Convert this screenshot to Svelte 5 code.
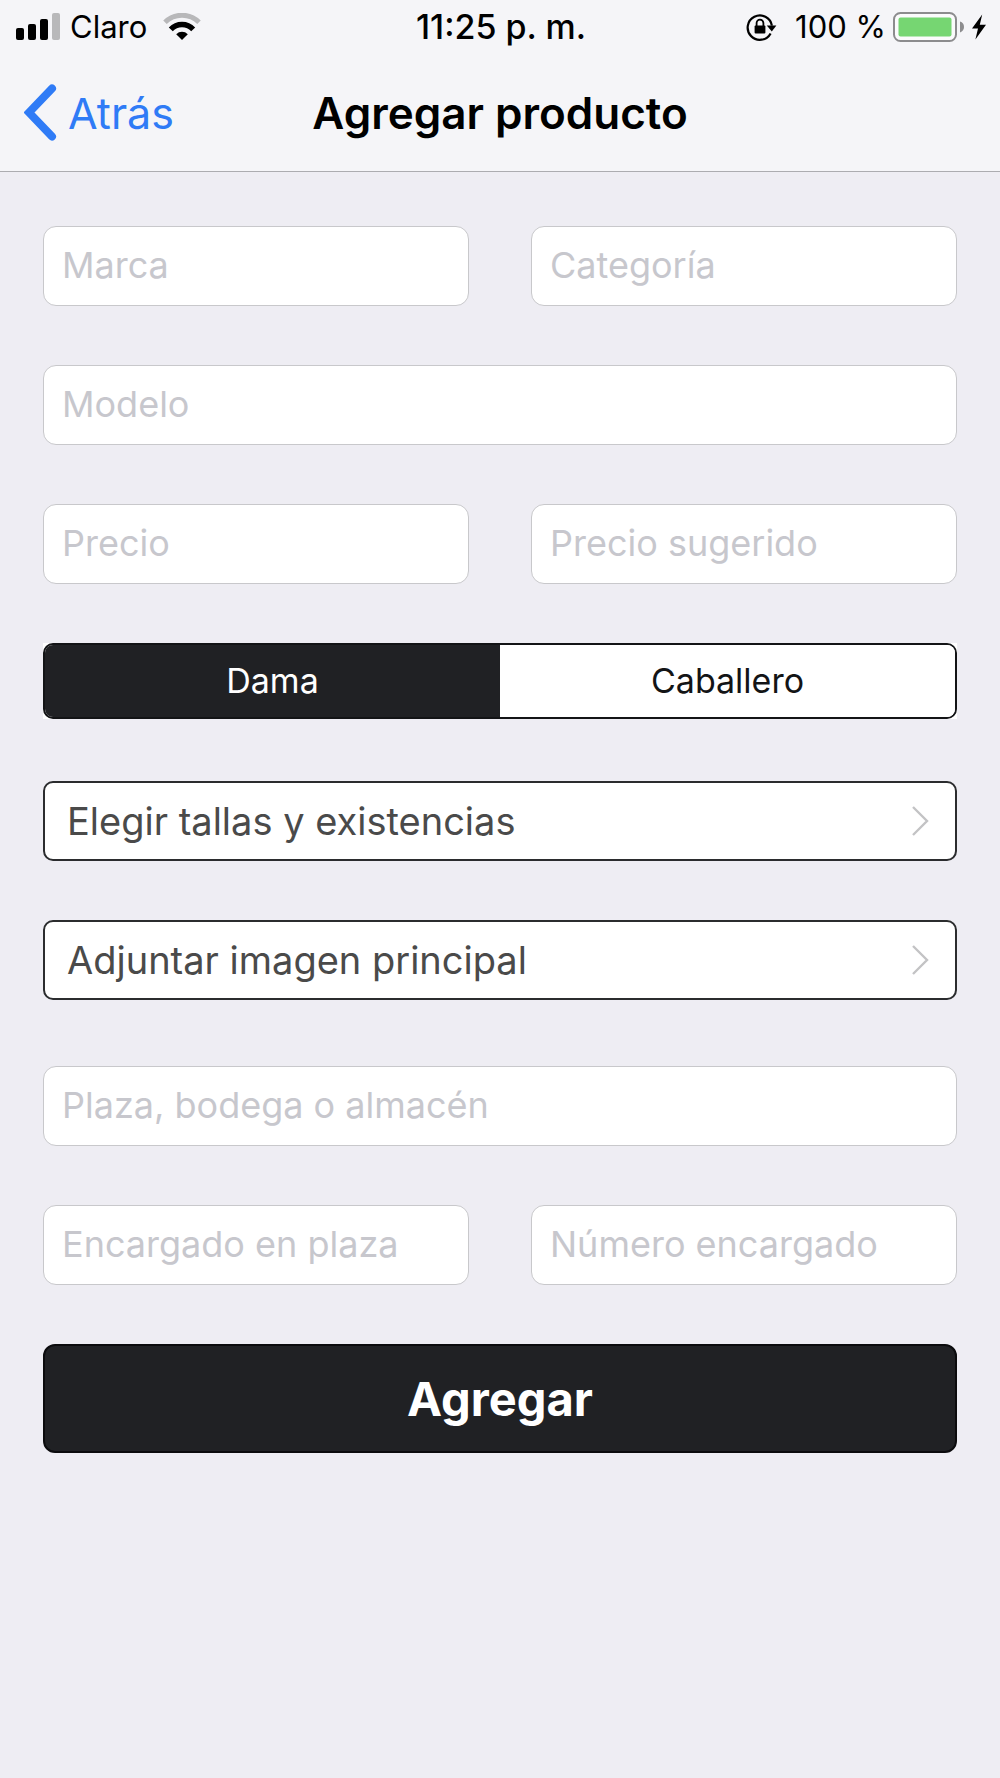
<script>
  let department = $state('dama');
  const departments = [
    { value: 'dama', label: 'Dama' },
    { value: 'caballero', label: 'Caballero' }
  ];
</script>

{#snippet field(id, label)}
  <input class="field" {id} name={id} type="text" placeholder={label} aria-label={label} />
{/snippet}

{#snippet link(label)}
  <button class="picker" type="button">
    <span>{label}</span>
    <svg width="18" height="32" viewBox="0 0 18 32" aria-hidden="true">
      <path d="M2 2 L16 16 L2 30" fill="none" stroke="#c3c3c5" stroke-width="2.4" />
    </svg>
  </button>
{/snippet}

<div class="screen">
  <header>
    <div class="status">
      <div class="carrier">
        <svg width="44" height="28" viewBox="0 0 44 28" aria-hidden="true">
          <rect x="0" y="15" width="8" height="12" rx="2" />
          <rect x="12" y="11" width="8" height="16" rx="2" />
          <rect x="24" y="6" width="8" height="21" rx="2" />
          <rect x="36" y="0" width="8" height="27" rx="2" fill="#b8b8ba" />
        </svg>
        <span>Claro</span>
        <svg class="wifi" width="38" height="28" viewBox="0 0 38 28" aria-hidden="true">
          <path d="M2 9.8 A24 24 0 0 1 36 9.8" fill="none" stroke="#b8b8ba" stroke-width="5" transform="translate(0 -0.5)" />
          <path d="M7.8 16.4 A15.2 15.2 0 0 1 30.2 16.4" fill="none" stroke="#000" stroke-width="5.4" />
          <path d="M13.2 21.2 A8.2 8.2 0 0 1 24.8 21.2 L19 27 Z" />
        </svg>
      </div>
      <time>11:25 p. m.</time>
      <div class="power">
        <svg class="lock" width="32" height="28" viewBox="0 0 32 28" aria-hidden="true">
          <path d="M24.6 20.4 A12.2 12.2 0 1 1 25.9 12.6" fill="none" stroke="#000" stroke-width="2.2" />
          <path d="M20.8 12.6 H30.4 L25.8 18.6 Z" />
          <rect x="8.6" y="12.4" width="10.8" height="8" rx="1" />
          <path d="M10.6 13 V10 A3.4 3.4 0 0 1 17.4 10 V13" fill="none" stroke="#000" stroke-width="1.8" />
        </svg>
        <span>100 %</span>
        <svg width="72" height="30" viewBox="0 0 72 30" aria-hidden="true">
          <rect x="1" y="1" width="62" height="28" rx="6.5" fill="#fff" fill-opacity="0.6" stroke="#8c8c8e" stroke-width="2" />
          <rect x="5.5" y="5.5" width="53" height="19" rx="2" fill="#76d672" />
          <path d="M67 9.6 Q71 11 71 15 Q71 19 67 20.4 Z" fill="#8c8c8e" />
        </svg>
        <svg width="14" height="26" viewBox="0 0 14 26" aria-hidden="true">
          <path d="M10.2 0.5 L0 14.6 H6 L3.4 25.5 L14 10.8 H7.8 Z" />
        </svg>
      </div>
    </div>
    <nav>
      <a class="back" href="#atras">
        <svg width="34" height="58" viewBox="0 0 34 58" aria-hidden="true">
          <path d="M28 4.5 L5 28.5 L28 52.5" fill="none" stroke="#2f7bf6" stroke-width="8" stroke-linecap="round" stroke-linejoin="miter" />
        </svg>
        <span>Atrás</span>
      </a>
      <h1>Agregar producto</h1>
    </nav>
  </header>

  <form onsubmit={(event) => event.preventDefault()}>
    <div class="row">
      {@render field('marca', 'Marca')}
      {@render field('categoria', 'Categoría')}
    </div>
    {@render field('modelo', 'Modelo')}
    <div class="row">
      {@render field('precio', 'Precio')}
      {@render field('sugerido', 'Precio sugerido')}
    </div>

    <div class="segments" role="radiogroup" aria-label="Departamento">
      <div class="track">
        {#each departments as item}
          <label class:selected={department === item.value}>
            <input type="radio" name="departamento" value={item.value} bind:group={department} />
            {item.label}
          </label>
        {/each}
      </div>
    </div>

    {@render link('Elegir tallas y existencias')}
    {@render link('Adjuntar imagen principal')}

    <div class="storage">
      {@render field('plaza', 'Plaza, bodega o almacén')}
      <div class="row">
        {@render field('encargado', 'Encargado en plaza')}
        {@render field('numero', 'Número encargado')}
      </div>
    </div>

    <button class="submit" type="submit">Agregar</button>
  </form>
</div>

<style>
  :global(body) {
    background: #eeedf3;
  }

  .screen {
    min-height: 100vh;
    background: #eeedf3;
    color: #000;
    font-family: Inter, "Liberation Sans", sans-serif;
  }

  header {
    background: #f5f5f8;
    border-bottom: 1px solid #acacb0;
  }

  svg {
    display: block;
    flex: none;
  }

  .status {
    display: grid;
    grid-template-columns: 1fr auto 1fr;
    align-items: center;
    height: 54px;
    padding: 0 14px 0 16px;
    font-size: 31px;
    line-height: 36px;
  }

  .carrier,
  .power {
    display: flex;
    align-items: center;
  }

  .carrier {
    gap: 10px;
  }

  .wifi {
    margin-left: 6px;
  }

  .power {
    justify-content: flex-end;
    gap: 7px;
  }

  .lock {
    margin-right: 10px;
  }

  time {
    font-size: 34px;
    font-weight: 500;
  }

  nav {
    display: grid;
    grid-template-columns: 1fr auto 1fr;
    align-items: center;
    height: 117px;
    padding: 0 24px;
  }

  .back {
    display: flex;
    align-items: center;
    gap: 10px;
    justify-self: start;
    color: #2f7bf6;
    font-size: 43px;
    line-height: 52px;
    text-decoration: none;
  }

  h1 {
    margin: 0;
    font-size: 44px;
    line-height: 52px;
    font-weight: 600;
  }

  form {
    display: flex;
    flex-direction: column;
    gap: 59px;
    padding: 54px 43px;
  }

  .row {
    display: grid;
    grid-template-columns: 1fr 1fr;
    gap: 62px;
  }

  .field {
    box-sizing: border-box;
    width: 100%;
    min-width: 0;
    height: 80px;
    padding: 0 18px 2px;
    border: 1px solid #c8c8cb;
    border-radius: 13px;
    background: #fff;
    color: #000;
    font: 36px/44px Inter, "Liberation Sans", sans-serif;
  }

  .field::placeholder {
    color: #c7c7cd;
    opacity: 1;
  }

  .segments {
    margin-bottom: 3px;
    background: #fff;
  }

  .segments input {
    position: absolute;
    inset: 0;
    margin: 0;
    opacity: 0;
  }

  .track {
    display: grid;
    grid-template-columns: 1fr 1fr;
    overflow: hidden;
    border: 2px solid #131416;
    border-radius: 10px;
  }

  .track label {
    position: relative;
    height: 72px;
    background: #fff;
    color: #131416;
    font-size: 34px;
    line-height: 72px;
    text-align: center;
  }

  .track .selected {
    background: #202124;
    color: #fff;
  }

  .picker {
    display: flex;
    align-items: center;
    justify-content: space-between;
    height: 80px;
    padding: 0 26px 0 22px;
    border: 2px solid #2b2c2e;
    border-radius: 10px;
    background: #fff;
    color: #4a4a4a;
    font: 38px/48px Inter, "Liberation Sans", sans-serif;
    text-align: left;
  }

  .storage {
    display: flex;
    flex-direction: column;
    gap: 59px;
    margin-top: 7px;
  }

  .submit {
    height: 109px;
    border: 2px solid #0b0b0d;
    border-radius: 12px;
    background: #202124;
    color: #fff;
    font: 700 47px/56px Inter, "Liberation Sans", sans-serif;
  }
</style>
